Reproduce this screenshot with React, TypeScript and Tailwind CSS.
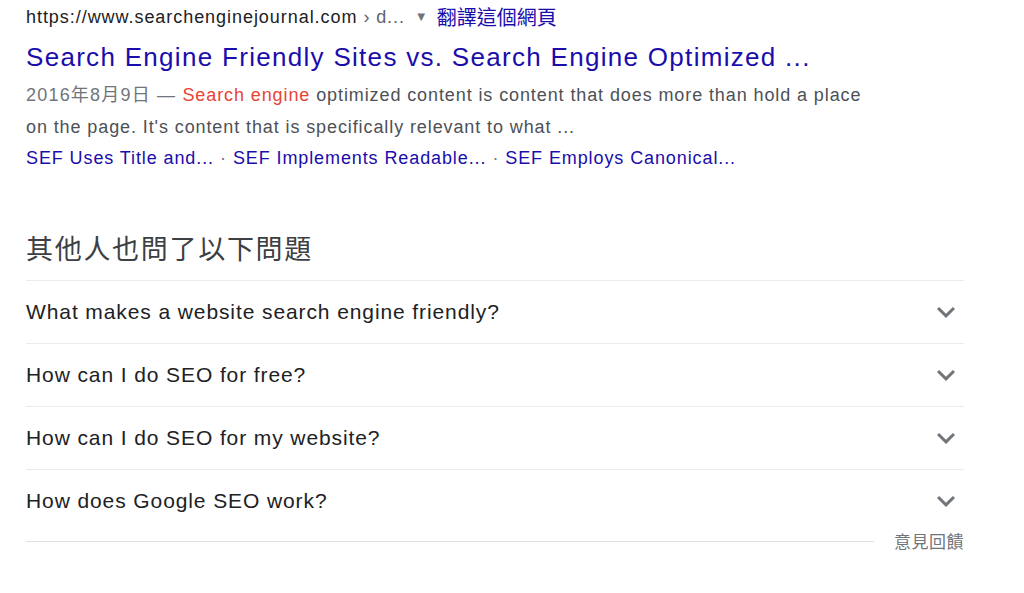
import React from "react";

const questions = [
  "What makes a website search engine friendly?",
  "How can I do SEO for free?",
  "How can I do SEO for my website?",
  "How does Google SEO work?",
];

const sitelinks = [
  "SEF Uses Title and...",
  "SEF Implements Readable...",
  "SEF Employs Canonical...",
];

function Chevron() {
  return (
    <svg width="36" height="36" viewBox="0 0 24 24" className="shrink-0 fill-[#70757a]">
      <path d="M16.59 8.59L12 13.17 7.41 8.59 6 10l6 6 6-6z" />
    </svg>
  );
}

export default function App() {
  return (
    <div className="min-h-screen bg-white font-['Liberation_Sans','Noto_Sans_CJK_TC',Arial,sans-serif]">
      <div className="w-[964px] pl-[26px] pt-[5px]">
        {/* result */}
        <div className="flex h-[24px] items-center text-[18px] leading-[24px] text-[#202124]">
          <span className="tracking-[0.95px]">https://www.searchenginejournal.com</span>
          <span className="ml-[6px] tracking-[0.9px] text-[#5f6368]">› d...</span>
          <span className="ml-[10px] text-[13px] text-[#70757a]">▼</span>
          <span className="ml-[9px] font-['Noto_Sans_CJK_TC',sans-serif] text-[20px] text-[#1a0dab]">
            翻譯這個網頁
          </span>
        </div>
        <h3 className="mt-[11px] text-[26px] leading-[34px] tracking-[1.3px] text-[#1a0dab]">
          Search Engine Friendly Sites vs. Search Engine Optimized ...
        </h3>
        <div className="mt-[5px] text-[18px] leading-[32px] tracking-[0.9px] text-[#4d5156]">
          <span className="tracking-[1.2px] text-[#70757a]">2016年8月9日 — </span>
          <span className="text-[#ea4335]">Search engine</span> optimized content is content
          that does more than hold a place
          <br />
          on the page. It's content that is specifically relevant to what ...
        </div>
        <div className="flex h-[30px] items-center text-[18px] leading-[30px] tracking-[0.9px] text-[#1a0dab]">
          {sitelinks.map((s, i) => (
            <React.Fragment key={s}>
              {i > 0 && <span className="mx-[6px] text-[#70757a]">·</span>}
              <span>{s}</span>
            </React.Fragment>
          ))}
        </div>

        {/* people also ask */}
        <h2 className="mt-[58px] font-['Noto_Sans_CJK_TC',sans-serif] text-[27px] leading-[34px] tracking-[1.7px] text-[#3c4043]">
          其他人也問了以下問題
        </h2>
        <div className="mt-[15px]">
          {questions.map((q) => (
            <div
              key={q}
              className="flex h-[63px] items-center justify-between border-t border-[#ebebeb] text-[21px] tracking-[0.9px] text-[#202124]"
            >
              <span>{q}</span>
              <Chevron />
            </div>
          ))}
        </div>
        <div className="flex h-[18px] items-center">
          <div className="h-px flex-1 bg-[#e0e0e0]" />
          <span className="ml-[20px] font-['Noto_Sans_CJK_TC',sans-serif] text-[17px] leading-[18px] tracking-[0.5px] text-[#70757a]">
            意見回饋
          </span>
        </div>
      </div>
    </div>
  );
}
